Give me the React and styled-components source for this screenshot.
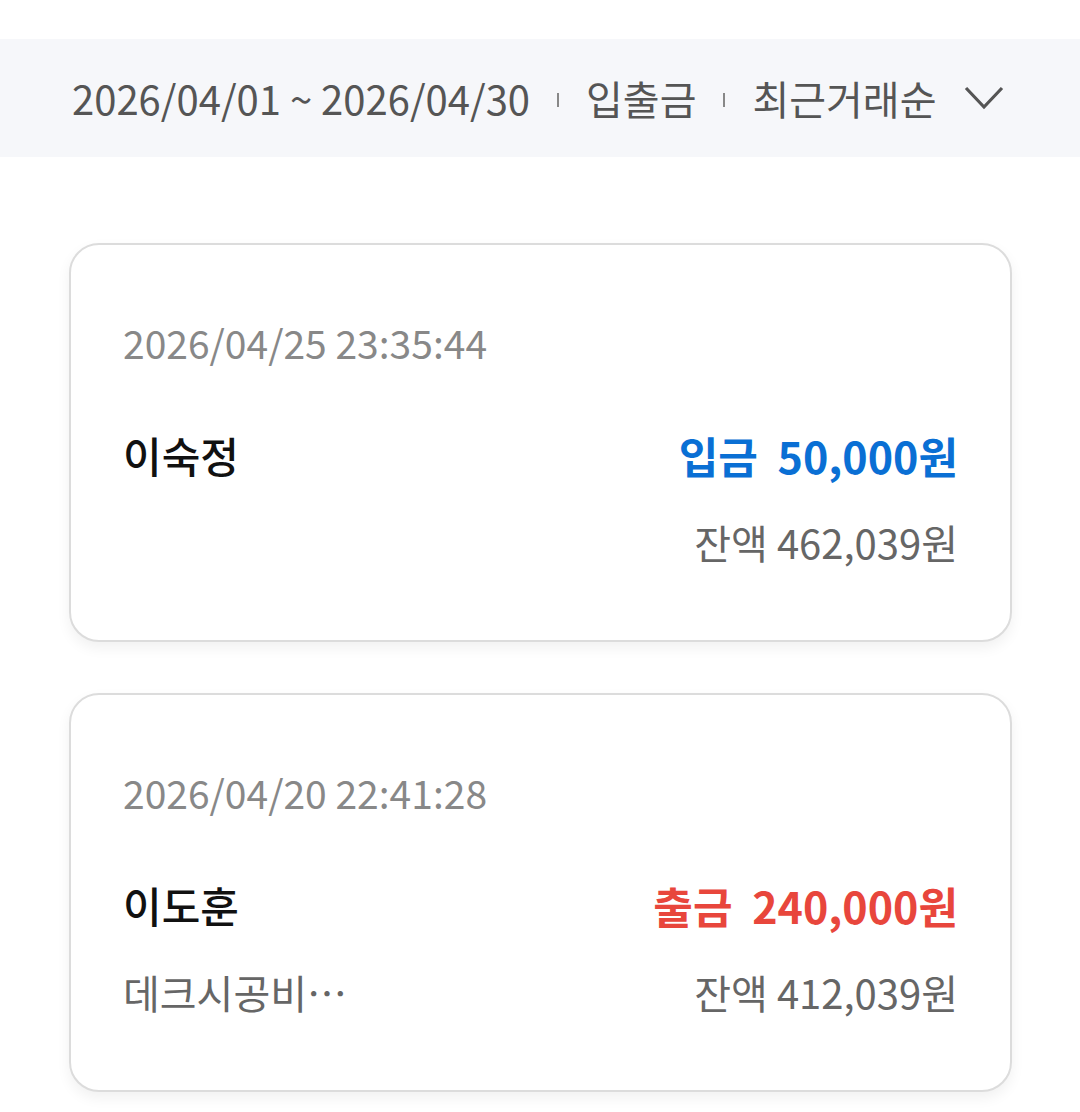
import React from 'react';
import styled, {createGlobalStyle} from 'styled-components';

const Global = createGlobalStyle`
  body {
    margin: 0;
    background: #fff;
    font-family: "Noto Sans CJK KR", "Noto Sans", sans-serif;
  }
`

const Page = styled.div`
  padding-top: 39px;
`

const FilterBar = styled.div`
  height: 118px;
  background: #f6f7fa;
  display: flex;
  align-items: center;
  padding: 0 72px;
  color: #555;
  font-size: 40px;
`

const Sep = styled.span`
  width: 2px;
  height: 14px;
  background: #888;
  margin: 4px 27px 0;
`

const Chevron = styled.svg`
  margin-left: 28px;
  width: 40px;
  height: 26px;
`

const List = styled.div`
  padding: 86px 68px 20px 69px;
  display: flex;
  flex-direction: column;
  gap: 51px;
`

const Card = styled.div`
  border: 2px solid #dcdcdc;
  border-radius: 30px;
  background: #fff;
  box-shadow: 0 6px 14px rgba(0, 0, 0, 0.06);
  padding: 72px 52px 73px 52px;
  display: flex;
  flex-direction: column;
`

const Date = styled.div`
  font-size: 39px;
  line-height: 50px;
  color: #888;
`

const Row = styled.div`
  display: flex;
  justify-content: space-between;
  align-items: center;
  margin-top: ${p => p.$top}px;
`

const Name = styled.div`
  font-size: 42px;
  line-height: 56px;
  font-weight: 500;
  color: #111;
`

const Amount = styled.div`
  font-size: 43px;
  line-height: 56px;
  font-weight: 700;
  color: ${p => (p.$in ? '#0a6fd4' : '#e8463c')};
  word-spacing: 10px;
`

const Sub = styled.div`
  font-size: 40px;
  line-height: 50px;
  color: #666;
`

const items = [
  {date: '2026/04/25 23:35:44', name: '이숙정', type: '입금', amount: '50,000원', balance: '462,039원', memo: ''},
  {date: '2026/04/20 22:41:28', name: '이도훈', type: '출금', amount: '240,000원', balance: '412,039원', memo: '데크시공비…'},
];

const App = () => (
  <Page>
    <Global/>
    <FilterBar>
      <span>2026/04/01 ~ 2026/04/30</span>
      <Sep/>
      <span>입출금</span>
      <Sep/>
      <span>최근거래순</span>
      <Chevron viewBox="0 0 40 26">
        <path d="M2 3 L20 22 L38 3" fill="none" stroke="#555" strokeWidth="3.2"/>
      </Chevron>
    </FilterBar>
    <List>
      {items.map(it => (
        <Card key={it.date}>
          <Date>{it.date}</Date>
          <Row $top={60}>
            <Name>{it.name}</Name>
            <Amount $in={it.type === '입금'}>{it.type} {it.amount}</Amount>
          </Row>
          <Row $top={34}>
            <Sub>{it.memo}</Sub>
            <Sub>잔액 {it.balance}</Sub>
          </Row>
        </Card>
      ))}
    </List>
  </Page>
);

export default App;
